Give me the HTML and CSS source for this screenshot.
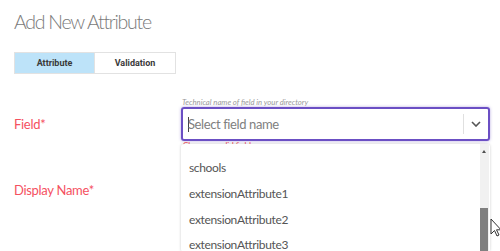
FILE: index.html
```html
<!DOCTYPE html>
<html lang="en">
<head>
    <meta charset="UTF-8">
    <title>Add New Attribute</title>
    <link rel="stylesheet" href="styles.css">
</head>
<body>
    <div class="page">
        <h1>Add New Attribute</h1>

        <div class="tabs">
            <div class="tab active">Attribute</div>
            <div class="tab">Validation</div>
        </div>

        <div class="form-row first">
            <label class="label">Field*</label>
            <div class="control">
                <div class="hint">Technical name of field in your directory</div>
                <div class="select focused">
                    <span class="caret"></span>
                    <span class="placeholder">Select field name</span>
                    <span class="separator"></span>
                    <span class="chevron">
                        <svg width="10" height="6" viewBox="0 0 10 6"><path d="M1 1l4 4 4-4" fill="none" stroke="#555" stroke-width="1.6"/></svg>
                    </span>
                </div>
                <div class="error">Choose a valid field</div>

                <div class="menu">
                    <ul class="options">
                        <li>schools</li>
                        <li>extensionAttribute1</li>
                        <li>extensionAttribute2</li>
                        <li>extensionAttribute3</li>
                    </ul>
                    <div class="scrollbar">
                        <span class="arrow-up"></span>
                        <span class="thumb"></span>
                    </div>
                </div>
            </div>
        </div>

        <div class="form-row">
            <label class="label">Display Name*</label>
            <div class="control"></div>
        </div>
    </div>

    <svg class="cursor" width="12" height="19" viewBox="0 0 12 19">
        <path d="M1 1v15l3.5-3.5 2.5 5.5 2-1-2.5-5.2H11z" fill="#fff" stroke="#333" stroke-width="1"/>
    </svg>
</body>
</html>
```

FILE: styles.css
```css
* {
    margin: 0;
    padding: 0;
    box-sizing: border-box;
}

html,
body {
    height: 251px;
    overflow: hidden;
}

body {
    font-family: Lato, 'Open Sans', sans-serif;
    background: white;
    color: #555;
    position: relative;
}

.page {
    padding: 9px 14px 0;
}

h1 {
    font-size: 19.5px;
    font-weight: 300;
    color: #7a7a7a;
    line-height: 25px;
    letter-spacing: -1.25px;
}

.tabs {
    display: inline-flex;
    margin-top: 18px;
    border: 1px solid #e2e2e2;
}

.tab {
    width: 80px;
    height: 20px;
    display: flex;
    align-items: center;
    justify-content: center;
    font-family: Roboto, sans-serif;
    font-size: 9px;
    font-weight: 700;
    color: #3a3a3a;
}

.tab.active {
    background: #bde3f9;
    border-right: 1px solid #e2e2e2;
}

.form-row {
    display: grid;
    grid-template-columns: 167px 309px;
}

.form-row.first {
    margin-top: 23px;
}

.label {
    font-size: 13px;
    letter-spacing: -0.3px;
    color: #f5515f;
    padding-top: 19px;
}

.form-row + .form-row .label {
    padding-top: 33px;
}

.control {
    position: relative;
}

.hint {
    font-size: 7.7px;
    font-style: italic;
    color: #999;
    line-height: 10px;
    padding-left: 1px;
}

.select {
    height: 34px;
    border: 2px solid #6b4fc4;
    border-radius: 3px;
    box-shadow: 0 0 3px rgba(107, 79, 196, 0.5);
    display: flex;
    align-items: center;
    padding-left: 5px;
}

.caret {
    width: 1px;
    height: 15px;
    background: #444;
}

.placeholder {
    flex: 1;
    font-size: 13px;
    letter-spacing: -0.4px;
    color: #808080;
    margin-left: -1px;
}

.separator {
    width: 1px;
    height: 20px;
    background: #e0e0e0;
}

.chevron {
    width: 24px;
    display: flex;
    justify-content: center;
}

.error {
    font-size: 8px;
    color: #f04050;
    line-height: 8px;
    padding-left: 2px;
    height: 8px;
    overflow: hidden;
}

.menu {
    position: absolute;
    top: 47px;
    left: 0;
    width: 309px;
    height: 108px;
    background: white;
    border-radius: 3px;
    box-shadow: 0 0 3px rgba(0, 0, 0, 0.2);
    display: flex;
    overflow: hidden;
    z-index: 2;
}

.options {
    list-style: none;
    flex: 1;
    padding-top: 16px;
}

.options li {
    font-size: 12px;
    letter-spacing: -0.35px;
    color: #555;
    height: 25.8px;
    padding-left: 8px;
}

.scrollbar {
    width: 9px;
    margin-right: 1px;
    background: #f1f1f1;
    position: relative;
}

.arrow-up {
    position: absolute;
    top: 6px;
    left: 2px;
    border-left: 2.5px solid transparent;
    border-right: 2.5px solid transparent;
    border-bottom: 3px solid #505050;
}

.thumb {
    position: absolute;
    top: 64px;
    left: 0;
    width: 8px;
    height: 44px;
    background: #808080;
}

.cursor {
    position: absolute;
    left: 490px;
    top: 218px;
    z-index: 3;
}
```
